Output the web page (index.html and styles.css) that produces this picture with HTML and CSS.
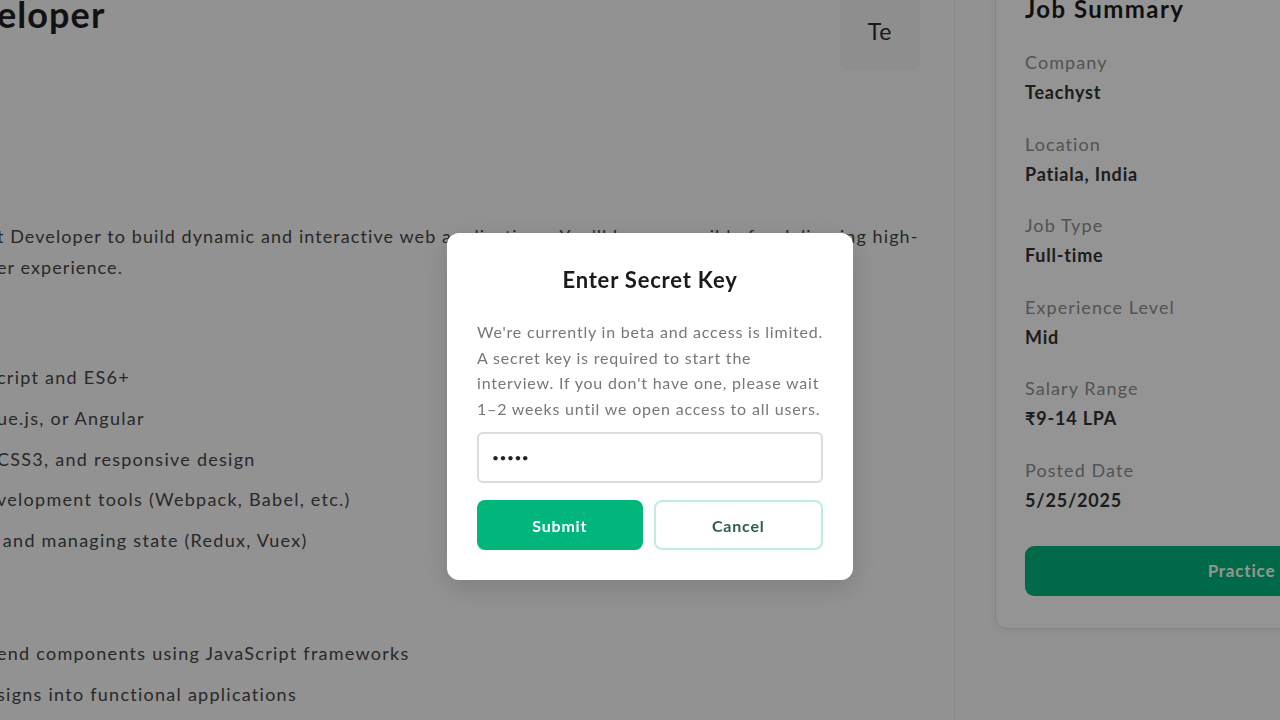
FILE: index.html
```html
<!DOCTYPE html>
<html lang="en">
<head>
    <meta charset="UTF-8">
    <meta name="viewport" content="width=device-width, initial-scale=1.0">
    <title>Job Details</title>
    <link rel="stylesheet" href="styles.css">
</head>
<body>
    <div class="page">
        <main class="main">
            <div class="job-header">
                <h1 class="job-title">eloper</h1>
                <div class="company-logo">Te</div>
            </div>

            <p class="job-description">t Developer to build dynamic and interactive web applications. You'll be responsible for delivering high-<br>er experience.</p>

            <ul class="job-list requirements">
                <li>cript and ES6+</li>
                <li>ue.js, or Angular</li>
                <li>CSS3, and responsive design</li>
                <li>velopment tools (Webpack, Babel, etc.)</li>
                <li>&nbsp;and managing state (Redux, Vuex)</li>
            </ul>

            <ul class="job-list responsibilities">
                <li>end components using JavaScript frameworks</li>
                <li>signs into functional applications</li>
            </ul>
        </main>

        <aside class="sidebar">
            <div class="summary-card">
                <h2 class="summary-title">Job Summary</h2>
                <div class="summary-item">
                    <div class="summary-label">Company</div>
                    <div class="summary-value">Teachyst</div>
                </div>
                <div class="summary-item">
                    <div class="summary-label">Location</div>
                    <div class="summary-value">Patiala, India</div>
                </div>
                <div class="summary-item">
                    <div class="summary-label">Job Type</div>
                    <div class="summary-value">Full-time</div>
                </div>
                <div class="summary-item">
                    <div class="summary-label">Experience Level</div>
                    <div class="summary-value">Mid</div>
                </div>
                <div class="summary-item">
                    <div class="summary-label">Salary Range</div>
                    <div class="summary-value">₹9-14 LPA</div>
                </div>
                <div class="summary-item">
                    <div class="summary-label">Posted Date</div>
                    <div class="summary-value">5/25/2025</div>
                </div>
                <button class="practice-button">Practice Interview</button>
            </div>
        </aside>
    </div>

    <div class="modal-overlay">
        <div class="modal">
            <h3 class="modal-title">Enter Secret Key</h3>
            <p class="modal-text">We're currently in beta and access is limited.<br>A secret key is required to start the<br>interview. If you don't have one, please wait<br>1–2 weeks until we open access to all users.</p>
            <input type="password" class="key-input" value="12345">
            <div class="modal-actions">
                <button class="btn btn-submit">Submit</button>
                <button class="btn btn-cancel">Cancel</button>
            </div>
        </div>
    </div>
</body>
</html>
```

FILE: styles.css
```css
* {
    box-sizing: border-box;
}

body {
    margin: 0;
    font-family: 'Lato', 'Noto Sans', sans-serif;
    letter-spacing: 0.05em;
    background-color: #fbfbfb;
    color: #333;
    overflow: hidden;
    height: 720px;
}

/* page is scrolled a little, so it starts above and left of the window */
.page {
    display: flex;
    margin: -38px 0 0 -3px;
}

.main {
    width: 958px;
    flex-shrink: 0;
    padding: 29px 34px 0 0;
    border-right: 1px solid #ebebeb;
    min-height: 800px;
}

.job-header {
    display: flex;
    justify-content: space-between;
    align-items: flex-start;
}

.job-title {
    margin: 3px 0 0;
    font-size: 36px;
    line-height: 40px;
    font-weight: 700;
    letter-spacing: 0.03em;
    color: #1f1f1f;
}

.company-logo {
    width: 80px;
    height: 80px;
    border-radius: 10px;
    background-color: #f4f4f5;
    display: flex;
    align-items: center;
    justify-content: center;
    font-size: 23px;
    color: #2a2a2a;
}

.job-description {
    margin: 150px 0 0;
    font-size: 18px;
    line-height: 31px;
    letter-spacing: 0.06em;
    color: #474747;
    white-space: nowrap;
}

.job-list {
    list-style: none;
    margin: 0;
    padding: 0;
    font-size: 18px;
    line-height: 28.8px;
    letter-spacing: 0.07em;
    color: #474747;
}

.job-list li {
    margin-bottom: 12px;
}

.requirements {
    margin-top: 80px;
}

.responsibilities {
    margin-top: 84px;
}

.sidebar {
    padding-left: 40px;
}

.summary-card {
    width: 578px;
    background-color: #fff;
    border: 1px solid #e6e6e6;
    border-radius: 12px;
    box-shadow: 0 2px 8px rgba(0, 0, 0, 0.06);
    padding: 30px 30px 32px 29px;
}

.summary-title {
    margin: 0 0 23px;
    font-size: 24px;
    line-height: 32px;
    font-weight: 700;
    letter-spacing: 0.06em;
    color: #1c1c1c;
}

.summary-item {
    margin-bottom: 23.5px;
}

.summary-label {
    font-size: 18px;
    line-height: 28px;
    letter-spacing: 0.06em;
    color: #8f8f8f;
    margin-bottom: 2px;
}

.summary-value {
    font-size: 18px;
    line-height: 28px;
    font-weight: 700;
    color: #333;
}

.practice-button {
    display: block;
    width: 100%;
    height: 50px;
    margin-top: 32px;
    border: none;
    border-radius: 9px;
    background-color: #00b67a;
    color: #fff;
    font-family: inherit;
    letter-spacing: inherit;
    font-size: 17px;
    font-weight: 700;
}

.modal-overlay {
    position: fixed;
    inset: 0;
    background-color: rgba(0, 0, 0, 0.42);
    display: flex;
    align-items: center;
    justify-content: center;
    padding: 93px 0 0 20px;
}

.modal {
    width: 406px;
    background-color: #fff;
    border-radius: 12px;
    box-shadow: 0 8px 30px rgba(0, 0, 0, 0.15);
    padding: 32px 30px 30px;
}

.modal-title {
    margin: 0;
    text-align: center;
    font-size: 22px;
    line-height: 30px;
    font-weight: 700;
    color: #1a1a1a;
}

.modal-text {
    margin: 24px 0 0;
    font-size: 16px;
    line-height: 25.5px;
    color: #777;
    white-space: nowrap;
}

.key-input {
    display: block;
    width: 100%;
    height: 51px;
    margin-top: 11px;
    padding: 0 13px;
    border: 2px solid #dcdcdc;
    border-radius: 6px;
    font-family: inherit;
    font-size: 12px;
    letter-spacing: 0.5px;
    color: #222;
    outline: none;
}

.modal-actions {
    display: flex;
    gap: 11px;
    margin-top: 17px;
}

.btn {
    flex: 1;
    height: 50px;
    border-radius: 8px;
    font-family: inherit;
    letter-spacing: inherit;
    font-size: 16px;
    font-weight: 700;
    cursor: pointer;
}

.btn-submit {
    background-color: #00b67a;
    border: none;
    color: #fff;
}

.btn-cancel {
    background-color: #fff;
    border: 2px solid #bdeed9;
    color: #2f5e4c;
}
```
